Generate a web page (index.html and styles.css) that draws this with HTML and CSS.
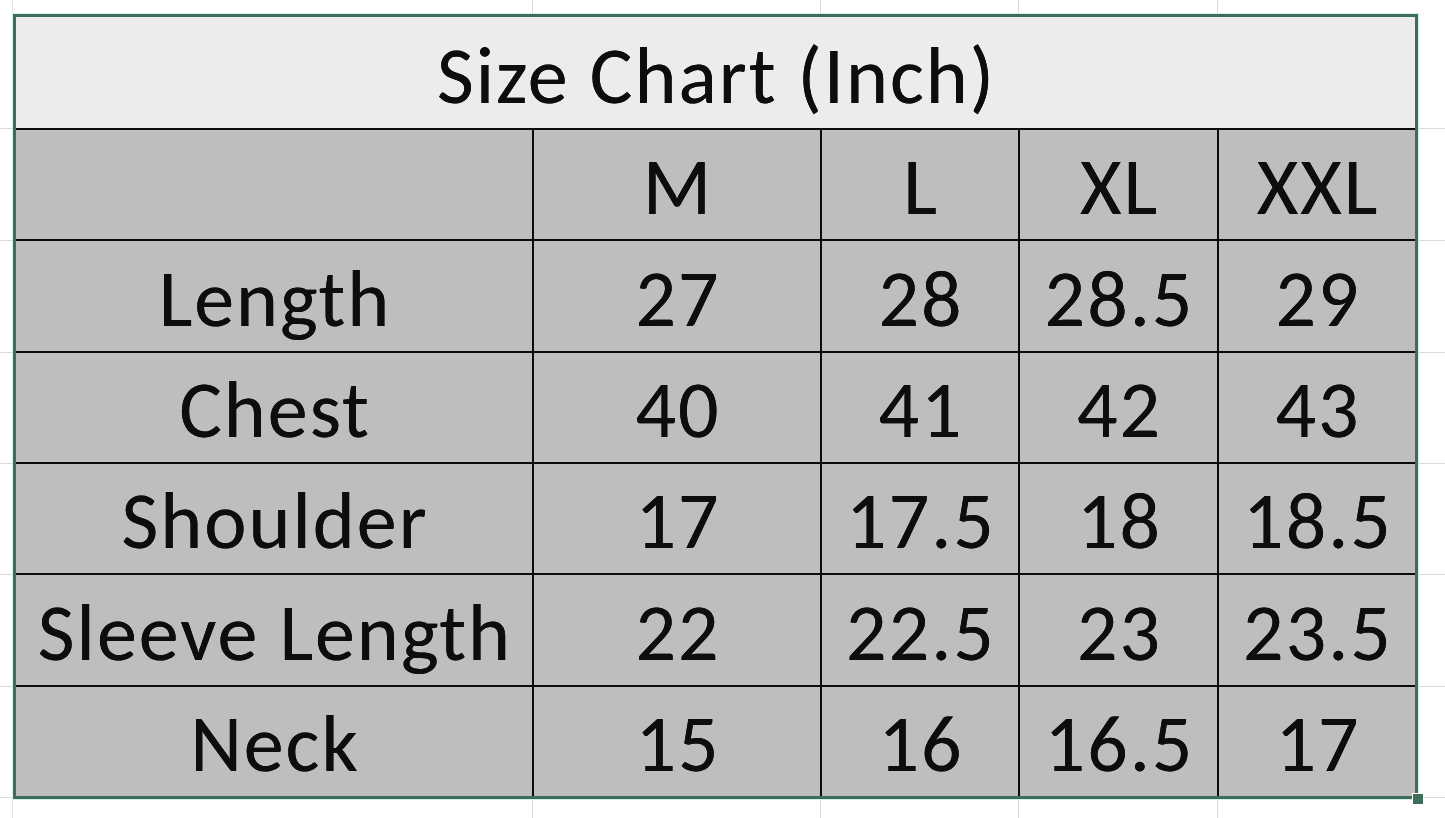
FILE: index.html
```html
<!DOCTYPE html>
<html lang="en">
<head>
<meta charset="utf-8">
<title>Size Chart (Inch)</title>
<link rel="stylesheet" href="styles.css">
</head>
<body>
<div class="sheet">
  <div class="chart">
    <div class="cell title">Size Chart (Inch)</div>
    <div class="cell"></div>
    <div class="cell">M</div>
    <div class="cell">L</div>
    <div class="cell">XL</div>
    <div class="cell">XXL</div>
    <div class="cell">Length</div>
    <div class="cell">27</div>
    <div class="cell">28</div>
    <div class="cell">28.5</div>
    <div class="cell">29</div>
    <div class="cell">Chest</div>
    <div class="cell">40</div>
    <div class="cell">41</div>
    <div class="cell">42</div>
    <div class="cell">43</div>
    <div class="cell">Shoulder</div>
    <div class="cell">17</div>
    <div class="cell">17.5</div>
    <div class="cell">18</div>
    <div class="cell">18.5</div>
    <div class="cell">Sleeve Length</div>
    <div class="cell">22</div>
    <div class="cell">22.5</div>
    <div class="cell">23</div>
    <div class="cell">23.5</div>
    <div class="cell">Neck</div>
    <div class="cell">15</div>
    <div class="cell">16</div>
    <div class="cell">16.5</div>
    <div class="cell">17</div>
  </div>
  <span class="handle"></span>
</div>
</body>
</html>
```
FILE: styles.css
```css
html, body {
  margin: 0;
  padding: 0;
}
body {
  width: 1445px;
  height: 818px;
  overflow: hidden;
  background-color: #ffffff;
  background-image:
    linear-gradient(to right, transparent 532px, #dadada 532px, #dadada 533px, transparent 533px),
    linear-gradient(to right, transparent 820px, #dadada 820px, #dadada 821px, transparent 821px),
    linear-gradient(to right, transparent 1018px, #dadada 1018px, #dadada 1019px, transparent 1019px),
    linear-gradient(to right, transparent 1217px, #dadada 1217px, #dadada 1218px, transparent 1218px),
    linear-gradient(to right, transparent 12px, #e2e2e2 12px, #e2e2e2 13px, transparent 13px),
    linear-gradient(to bottom, transparent 128px, #dadada 128px, #dadada 129px, transparent 129px),
    linear-gradient(to bottom, transparent 240px, #dadada 240px, #dadada 241px, transparent 241px),
    linear-gradient(to bottom, transparent 352px, #dadada 352px, #dadada 353px, transparent 353px),
    linear-gradient(to bottom, transparent 463px, #dadada 463px, #dadada 464px, transparent 464px),
    linear-gradient(to bottom, transparent 574px, #dadada 574px, #dadada 575px, transparent 575px),
    linear-gradient(to bottom, transparent 686px, #dadada 686px, #dadada 687px, transparent 687px),
    linear-gradient(to bottom, transparent 797px, #dadada 797px, #dadada 798px, transparent 798px);
  font-family: Carlito, Calibri, Lato, "Liberation Sans", sans-serif;
  color: #0d0d0d;
}
.sheet {
  position: relative;
  margin: 14px 0 0 13px;
  width: 1399px;
  border: 3px solid #3e6e59;
  box-shadow: 0 0 0 1px #d3eee2;
  background: #d3eee2;
}
.chart {
  display: grid;
  grid-template-columns: 516px 286px 196px 197px 196px;
  grid-template-rows: 111px repeat(6, 1fr);
  height: 779px;
  gap: 2px;
  background: #0a0a0a;
}
.cell {
  display: flex;
  justify-content: center;
  align-items: flex-end;
  padding: 0 0 12px 2px;
  background: #bebebe;
  font-size: 80px;
  line-height: 1;
  letter-spacing: 2px;
  white-space: nowrap;
  overflow: hidden;
  text-shadow: 0 0 0.6px #0d0d0d;
}
.title {
  grid-column: 1 / -1;
  background: #ececec;
}
.handle {
  position: absolute;
  right: -9px;
  bottom: -9px;
  width: 10px;
  height: 10px;
  background: #3e6e59;
  border: 1px solid #ffffff;
}
```
